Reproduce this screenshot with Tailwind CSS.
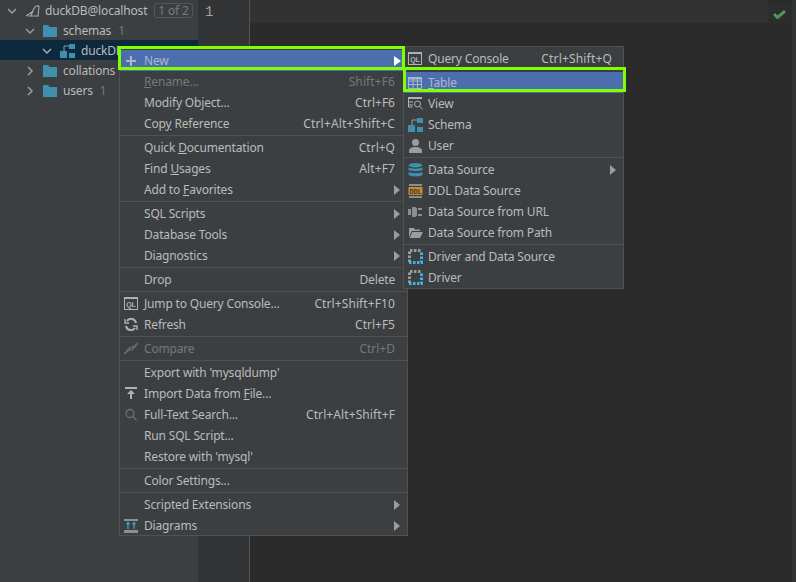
<!DOCTYPE html>
<html><head><meta charset="utf-8"><script src="https://cdn.jsdelivr.net/npm/@tailwindcss/browser@4"></script></head>
<body class="m-0 overflow-hidden">
<div class="relative flex w-[796px] h-[582px] overflow-hidden font-['Noto_Sans','Open_Sans',sans-serif] text-[12px] tracking-[-0.17px] text-[#bbbbbb] bg-[#2b2b2b]">
  <!-- sidebar -->
  <div class="w-[198px] shrink-0 bg-[#3c3f41]">
    <div class="flex items-center h-[20px] pt-[1px] pl-[7px]">
      <svg class="w-[10px] h-[10px] mr-[8px]" viewBox="0 0 10 10" fill="none" stroke="#9a9da0" stroke-width="1.5"><path d="M1 3l4 4 4-4"/></svg>
      <svg class="w-[16px] h-[12px] mr-[4px]" viewBox="0 0 16 12" fill="none" stroke="#a4a7a9" stroke-width="1.100"><path d="M1 11L7 7l3-5 3-1.500 1 1-1 9.500M8 6l-2 5M3 11h11"/></svg>
      <span>duckDB@localhost</span>
      <span class="ml-[7px] h-[15px] px-[3px] border border-[#55585a] rounded-[3px] text-[#777a7c] leading-[13px]">1 of 2</span>
    </div>
    <div class="flex items-center h-[20px] pt-[1px] pl-[25px]">
      <svg class="w-[10px] h-[10px] mr-[8px]" viewBox="0 0 10 10" fill="none" stroke="#9a9da0" stroke-width="1.5"><path d="M1 3l4 4 4-4"/></svg>
      <svg class="w-[14px] h-[12px] mr-[6px]" viewBox="0 0 14 12" fill="#3f8fae"><path d="M0 0h5l1.500 2H14v10H0z"/></svg>
      <span>schemas</span><span class="ml-[7px] text-[#777a7c]">1</span>
    </div>
    <div class="flex items-center h-[20px] pt-[1px] pl-[42px] bg-[#0d293e]">
      <svg class="w-[10px] h-[10px] mr-[8px]" viewBox="0 0 10 10" fill="none" stroke="#a9acae" stroke-width="1.5"><path d="M1 3l4 4 4-4"/></svg>
      <svg class="w-[15px] h-[14px] mr-[6px]" viewBox="0 0 15 14"><path d="M0 7h7v7H0zM9 0h6v5H9zM9 9h6v5H9z" fill="#3f8fae"/><path d="M4 7V2h5" fill="none" stroke="#9a9da0"/></svg>
      <span>duckDB</span>
    </div>
    <div class="flex items-center h-[20px] pt-[1px] pl-[25px]">
      <svg class="w-[10px] h-[10px] mr-[8px]" viewBox="0 0 10 10" fill="none" stroke="#9a9da0" stroke-width="1.5"><path d="M3 1l4 4-4 4"/></svg>
      <svg class="w-[14px] h-[12px] mr-[6px]" viewBox="0 0 14 12" fill="#3f8fae"><path d="M0 0h5l1.500 2H14v10H0z"/></svg>
      <span>collations</span>
    </div>
    <div class="flex items-center h-[20px] pt-[1px] pl-[25px]">
      <svg class="w-[10px] h-[10px] mr-[8px]" viewBox="0 0 10 10" fill="none" stroke="#9a9da0" stroke-width="1.5"><path d="M3 1l4 4-4 4"/></svg>
      <svg class="w-[14px] h-[12px] mr-[6px]" viewBox="0 0 14 12" fill="#3f8fae"><path d="M0 0h5l1.500 2H14v10H0z"/></svg>
      <span>users</span><span class="ml-[7px] text-[#777a7c]">1</span>
    </div>
  </div>
  <!-- gutter -->
  <div class="w-[52px] shrink-0 bg-[#313335] border-r border-[#515658]">
    <div class="h-[24px] pl-[7px] leading-[25px] text-[#a4a3a3] font-['Liberation_Mono',monospace] text-[14px] tracking-normal">1</div>
  </div>
  <!-- editor -->
  <div class="flex-1 flex">
    <div class="flex-1 flex flex-col">
      <div class="flex h-[23px]">
        <div class="flex-1 bg-[#323232]"></div>
        <div class="w-[24px] pt-[4px]"><div class="h-[19px] bg-[#2d2d2d] pt-[6px] pl-[5px]">
          <svg class="w-[13px] h-[9px] block" viewBox="0 0 13 9" fill="none" stroke="#499c54" stroke-width="3"><path d="M1 4l3.500 3.500L12 1"/></svg>
        </div></div>
      </div>
    </div>
    <div class="w-[4px] bg-[#313335]"></div>
  </div>

  <!-- main context menu -->
  <div class="absolute left-[119px] top-[46px] w-[289px] h-[490px] bg-[#3c3f41] border border-[#515151] pt-[3px]">
    <div class="flex items-center h-[21px] bg-[#4b6eaf] pl-[4px] pr-[7px] text-[#b0b8c8]">
      <span class="w-[20px] flex"><svg class="w-[12px] h-[12px] ml-[1px]" viewBox="0 0 12 12" fill="#a9b7c6"><path d="M5 1h2v4h4v2H7v4H5V7H1V5h4z"/></svg></span>
      <span class="flex-1">New</span>
      <svg class="w-[7px] h-[10px] -mr-[1px]" viewBox="0 0 7 10" fill="#ffffff"><path d="M0 0l7 5-7 5z"/></svg>
    </div>
    <div class="flex items-center h-[21px] pl-[24px] pr-[12px] justify-between text-[#777777]"><span><u>R</u>ename...</span><span class="tracking-[0.1px]">Shift+F6</span></div>
    <div class="flex items-center h-[21px] pl-[24px] pr-[12px] justify-between"><span>Modify Object...</span><span class="tracking-normal">Ctrl+F6</span></div>
    <div class="flex items-center h-[21px] pl-[24px] pr-[12px] justify-between"><span>Cop<u>y</u> Reference</span><span class="tracking-[0.19px]">Ctrl+Alt+Shift+C</span></div>
    <div class="h-[3px] border-b border-[#515151] -translate-y-[1px]"></div>
    <div class="flex items-center h-[21px] pl-[24px] pr-[12px] justify-between"><span>Quick <u>D</u>ocumentation</span><span class="tracking-normal">Ctrl+Q</span></div>
    <div class="flex items-center h-[21px] pl-[24px] pr-[12px] justify-between"><span>Find <u>U</u>sages</span><span class="tracking-[0.1px]">Alt+F7</span></div>
    <div class="flex items-center h-[21px] pl-[24px] pr-[7px] justify-between"><span>Add to <u>F</u>avorites</span><svg class="w-[6px] h-[10px]" viewBox="0 0 6 10" fill="#9a9da0"><path d="M0 0l6 5-6 5z"/></svg></div>
    <div class="h-[3px] border-b border-[#515151] -translate-y-[1px]"></div>
    <div class="flex items-center h-[21px] pl-[24px] pr-[7px] justify-between"><span>SQL Scripts</span><svg class="w-[6px] h-[10px]" viewBox="0 0 6 10" fill="#9a9da0"><path d="M0 0l6 5-6 5z"/></svg></div>
    <div class="flex items-center h-[21px] pl-[24px] pr-[7px] justify-between"><span>Database Tools</span><svg class="w-[6px] h-[10px]" viewBox="0 0 6 10" fill="#9a9da0"><path d="M0 0l6 5-6 5z"/></svg></div>
    <div class="flex items-center h-[21px] pl-[24px] pr-[7px] justify-between"><span>Diagnostics</span><svg class="w-[6px] h-[10px]" viewBox="0 0 6 10" fill="#9a9da0"><path d="M0 0l6 5-6 5z"/></svg></div>
    <div class="h-[3px] border-b border-[#515151] -translate-y-[1px]"></div>
    <div class="flex items-center h-[21px] pl-[24px] pr-[12px] justify-between"><span>Drop</span><span>Delete</span></div>
    <div class="h-[3px] border-b border-[#515151] -translate-y-[1px]"></div>
    <div class="flex items-center h-[21px] pl-[4px] pr-[12px]">
      <svg class="w-[14px] h-[13px] mr-[6px]" viewBox="0 0 14 13"><rect x=".5" y=".5" width="13" height="12" fill="none" stroke="#afb1b3"/><rect x="0" y="0" width="14" height="2" fill="#afb1b3"/><text x="7" y="10" font-size="7" font-weight="700" text-anchor="middle" fill="#afb1b3" font-family="Liberation Sans">QL</text></svg>
      <span class="flex-1">Jump to Query Console...</span><span class="tracking-[0.1px]">Ctrl+Shift+F10</span></div>
    <div class="flex items-center h-[21px] pl-[4px] pr-[12px]">
      <svg class="w-[14px] h-[13px] mr-[6px]" viewBox="0 0 14 13" fill="none" stroke="#afb1b3" stroke-width="2"><path d="M12 5A5 5 0 0 0 3 3M2 8a5 5 0 0 0 9 2"/><path d="M1 1v4h4M13 12V8H9" stroke-width="1.400"/></svg>
      <span class="flex-1">Refresh</span><span class="tracking-normal">Ctrl+F5</span></div>
    <div class="h-[3px] border-b border-[#515151] -translate-y-[1px]"></div>
    <div class="flex items-center h-[21px] pl-[4px] pr-[12px] text-[#777777]">
      <svg class="w-[14px] h-[13px] mr-[6px]" viewBox="0 0 14 13" fill="none" stroke="#66686a" stroke-width="1.800"><path d="M0 12l5-4.500M14 1L9 5.500"/><path d="M6.500 3.500v5.500H1.500z" fill="#66686a" stroke="none"/><path d="M7.500 9.500V4h5z" fill="#66686a" stroke="none"/></svg>
      <span class="flex-1">Compare</span><span class="tracking-normal">Ctrl+D</span></div>
    <div class="h-[3px] border-b border-[#515151] -translate-y-[1px]"></div>
    <div class="flex items-center h-[21px] pl-[24px] pr-[12px]"><span>Export with 'mysqldump'</span></div>
    <div class="flex items-center h-[21px] pl-[4px] pr-[12px]">
      <svg class="w-[14px] h-[13px] mr-[6px]" viewBox="0 0 14 13" fill="#afb1b3"><path d="M1 0h12v2H1zM7 3l4 4H8v5H6V7H3z"/></svg>
      <span>Import Data from <u>F</u>ile...</span></div>
    <div class="flex items-center h-[21px] pl-[4px] pr-[12px]">
      <svg class="w-[14px] h-[13px] mr-[6px]" viewBox="0 0 14 13" fill="none" stroke="#6f7274" stroke-width="1.300"><circle cx="6" cy="5.500" r="4"/><path d="M9 8.500l3.500 3.500"/></svg>
      <span class="flex-1">Full-Text Search...</span><span class="tracking-[0.1px]">Ctrl+Alt+Shift+F</span></div>
    <div class="flex items-center h-[21px] pl-[24px] pr-[12px]"><span>Run SQL Script...</span></div>
    <div class="flex items-center h-[21px] pl-[24px] pr-[12px]"><span>Restore with 'mysql'</span></div>
    <div class="h-[3px] border-b border-[#515151] -translate-y-[1px]"></div>
    <div class="flex items-center h-[21px] pl-[24px] pr-[12px]"><span>Color Settings...</span></div>
    <div class="h-[3px] border-b border-[#515151] -translate-y-[1px]"></div>
    <div class="flex items-center h-[21px] pl-[24px] pr-[7px] justify-between"><span>Scripted Extensions</span><svg class="w-[6px] h-[10px]" viewBox="0 0 6 10" fill="#9a9da0"><path d="M0 0l6 5-6 5z"/></svg></div>
    <div class="flex items-center h-[21px] pl-[4px] pr-[7px]">
      <svg class="w-[14px] h-[14px] mr-[6px]" viewBox="0 0 14 14"><path d="M0 0h14v2H0zM0 11h14v3H0z" fill="#8c8f91"/><path d="M4 10V4M2.500 5.500L4 3.500l1.500 2M10 10V4M8.500 5.500L10 3.500l1.500 2" fill="none" stroke="#3ca8d8" stroke-width="1.200"/></svg>
      <span class="flex-1">Diagrams</span><svg class="w-[6px] h-[10px]" viewBox="0 0 6 10" fill="#9a9da0"><path d="M0 0l6 5-6 5z"/></svg></div>
  </div>

  <!-- submenu -->
  <div class="absolute left-[403px] top-[46px] w-[221px] h-[243px] bg-[#3c3f41] border border-[#515151] pt-[1px]">
    <div class="flex items-center h-[21px] pl-[4px] pr-[11px]">
      <svg class="w-[14px] h-[13px] mr-[6px]" viewBox="0 0 14 13"><rect x=".5" y=".5" width="13" height="12" fill="none" stroke="#afb1b3"/><rect x="0" y="0" width="14" height="2" fill="#afb1b3"/><text x="7" y="10" font-size="7" font-weight="700" text-anchor="middle" fill="#afb1b3" font-family="Liberation Sans">QL</text></svg>
      <span class="flex-1">Query Console</span><span class="tracking-[0.17px]">Ctrl+Shift+Q</span></div>
    <div class="h-[3px]"></div>
    <div class="flex items-center h-[21px] pl-[4px] bg-[#4b6eaf] text-[#b0b8c8]">
      <svg class="w-[14px] h-[12px] mr-[6px]" viewBox="0 0 14 12" fill="none" stroke="#a9b7c6"><path d="M.5.500h13v11H.5zM.5 4h13M.5 7.500h13M5 .5v11M9.500.5v11"/><path d="M0 0h14v2.500H0z" fill="#a9b7c6" stroke="none"/></svg>
      <span><u>T</u>able</span></div>
    <div class="flex items-center h-[21px] pl-[4px]">
      <svg class="w-[15px] h-[14px] mr-[5px]" viewBox="0 0 15 14" fill="none" stroke="#afb1b3"><path d="M0 1h14" stroke-width="2"/><path d="M.5 2v8h4M1 5h4M1 8h4"/><circle cx="9.500" cy="7" r="3"/><path d="M12 9.500l2.500 3"/></svg>
      <span>View</span></div>
    <div class="flex items-center h-[21px] pl-[4px]">
      <svg class="w-[15px] h-[14px] mr-[5px]" viewBox="0 0 15 14"><path d="M0 7h7v7H0zM9 0h6v5H9zM9 9h6v5H9z" fill="#3f8fae"/><path d="M4 7V2h5" fill="none" stroke="#9a9da0"/></svg>
      <span>Schema</span></div>
    <div class="flex items-center h-[21px] pl-[4px]">
      <svg class="w-[15px] h-[14px] mr-[5px]" viewBox="0 0 15 14" fill="#9a9da0"><circle cx="7.500" cy="3.500" r="3.500"/><path d="M1 14v-2c0-3 3-4 6.500-4S14 9 14 12v2z"/></svg>
      <span>User</span></div>
    <div class="h-[3px] border-b border-[#515151] -translate-y-[1px]"></div>
    <div class="flex items-center h-[21px] pl-[4px] pr-[7px]">
      <svg class="w-[15px] h-[14px] mr-[5px]" viewBox="0 0 15 14" fill="#3f8fae"><ellipse cx="7.500" cy="2.200" rx="7" ry="2.200"/><path d="M.5 4.500c2 1.500 12 1.500 14 0v2.500c-2 1.500-12 1.500-14 0zM.5 9c2 1.500 12 1.500 14 0v2.800c-2 2.200-12 2.200-14 0z"/></svg>
      <span class="flex-1">Data Source</span><svg class="w-[6px] h-[10px]" viewBox="0 0 6 10" fill="#9a9da0"><path d="M0 0l6 5-6 5z"/></svg></div>
    <div class="flex items-center h-[21px] pl-[4px]">
      <svg class="w-[15px] h-[14px] mr-[5px]" viewBox="0 0 15 14"><path d="M1 0h13v2H1zM1 12h13v2H1z" fill="#8c8f91"/><rect x=".5" y="3" width="14" height="8" fill="#c98a2b"/><text x="7.500" y="10" font-size="7" font-weight="700" text-anchor="middle" fill="#3c3f41" font-family="Liberation Mono">DDL</text></svg>
      <span>DDL Data Source</span></div>
    <div class="flex items-center h-[21px] pl-[4px]">
      <svg class="w-[15px] h-[14px] mr-[5px]" viewBox="0 0 15 14" fill="#8c8f91"><path d="M0 4h3v6H0zM4 2c3 0 5 0 5 2v6c0 2-2 2-5 2zM10 3h4v2h-4zM10 9h4v2h-4z"/></svg>
      <span>Data Source from URL</span></div>
    <div class="flex items-center h-[21px] pl-[4px]">
      <svg class="w-[15px] h-[14px] mr-[5px]" viewBox="0 0 15 14" fill="#9a9da0"><path d="M1 2h5l1 1.500h5V5H4L1 11zM4.500 6H15l-3 6H1.500z"/></svg>
      <span>Data Source from Path</span></div>
    <div class="h-[3px] border-b border-[#515151] -translate-y-[1px]"></div>
    <div class="flex items-center h-[21px] pl-[4px]">
      <svg class="w-[15px] h-[15px] mr-[5px]" viewBox="0 0 15 15" fill="none"><path d="M1.500 13V1.500H14" stroke="#9a9da0" stroke-width="3" stroke-dasharray="2.500 1.500"/><path d="M1 13.500h12.500V2" stroke="#3fb4e8" stroke-width="3" stroke-dasharray="2.500 1.500"/></svg>
      <span>Driver and Data Source</span></div>
    <div class="flex items-center h-[21px] pl-[4px]">
      <svg class="w-[15px] h-[15px] mr-[5px]" viewBox="0 0 15 15" fill="none"><path d="M1.500 13V1.500H14" stroke="#9a9da0" stroke-width="3" stroke-dasharray="2.500 1.500"/><path d="M1 13.500h12.500V2" stroke="#3fb4e8" stroke-width="3" stroke-dasharray="2.500 1.500"/></svg>
      <span>Driver</span></div>
  </div>

  <!-- annotation highlights -->
  <div class="absolute left-[118px] top-[46px] w-[287px] h-[24px] border-[3px] border-[#7fff00]"></div>
  <div class="absolute left-[403px] top-[67px] w-[223px] h-[25px] border-[3px] border-[#7fff00]"></div>
</div>
</body></html>
